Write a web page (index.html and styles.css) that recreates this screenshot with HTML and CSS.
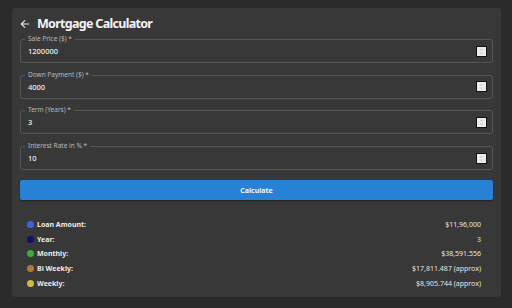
FILE: index.html
```html
<!DOCTYPE html>
<html lang="en">
<head>
    <meta charset="UTF-8">
    <title>Mortgage Calculator</title>
    <link rel="stylesheet" href="styles.css">
</head>
<body>
    <div class="card">
        <div class="header">
            <svg class="back" width="10" height="10" viewBox="0 0 10 10">
                <path d="M9 5H1.5M5 1.3L1.3 5L5 8.7" fill="none" stroke="#e6e6e6" stroke-width="1.2"/>
            </svg>
            <h1>Mortgage Calculator</h1>
        </div>

        <div class="form">
            <div class="field">
                <span class="field-label">Sale Price ($) *</span>
                <span class="field-value">1200000</span>
                <svg class="spin" width="11" height="11" viewBox="0 0 11 11"><path d="M4 4.2L5.5 2.8L7 4.2M4 6.8L5.5 8.2L7 6.8" fill="none" stroke="#9c9c9c" stroke-width=".8"/></svg>
            </div>
            <div class="field">
                <span class="field-label">Down Payment ($) *</span>
                <span class="field-value">4000</span>
                <svg class="spin" width="11" height="11" viewBox="0 0 11 11"><path d="M4 4.2L5.5 2.8L7 4.2M4 6.8L5.5 8.2L7 6.8" fill="none" stroke="#9c9c9c" stroke-width=".8"/></svg>
            </div>
            <div class="field">
                <span class="field-label">Term (Years) *</span>
                <span class="field-value">3</span>
                <svg class="spin" width="11" height="11" viewBox="0 0 11 11"><path d="M4 4.2L5.5 2.8L7 4.2M4 6.8L5.5 8.2L7 6.8" fill="none" stroke="#9c9c9c" stroke-width=".8"/></svg>
            </div>
            <div class="field">
                <span class="field-label">Interest Rate in % *</span>
                <span class="field-value">10</span>
                <svg class="spin" width="11" height="11" viewBox="0 0 11 11"><path d="M4 4.2L5.5 2.8L7 4.2M4 6.8L5.5 8.2L7 6.8" fill="none" stroke="#9c9c9c" stroke-width=".8"/></svg>
            </div>
            <button class="btn">Calculate</button>
        </div>

        <ul class="results">
            <li><span class="dot dot-loan"></span><b>Loan Amount:</b><span class="val">$11,96,000</span></li>
            <li><span class="dot dot-year"></span><b>Year:</b><span class="val">3</span></li>
            <li><span class="dot dot-month"></span><b>Monthly:</b><span class="val">$38,591.556</span></li>
            <li><span class="dot dot-bi"></span><b>Bi Weekly:</b><span class="val">$17,811.487 (approx)</span></li>
            <li><span class="dot dot-week"></span><b>Weekly:</b><span class="val">$8,905.744 (approx)</span></li>
        </ul>
    </div>
</body>
</html>
```

FILE: styles.css
```css
html,body{
    margin: 0;
    background-color: #2b2b2b;
    font-family: "Noto Sans", "Open Sans", sans-serif;
    color: #ececec;
}
body{
    padding: 8px 11px 0 12px;
}
.card{
    height: 289px;
    box-sizing: border-box;
    padding: 0 8px;
    background-color: #383838;
    border-radius: 4px;
}
.header{
    display: flex;
    align-items: center;
    height: 31px;
}
.back{
    margin: 0 7px 0 0;
}
.header h1{
    margin: 0;
    font-size: 12.5px;
    font-weight: 700;
    letter-spacing: -0.7px;
    color: #f4f4f4;
}
.form{
    display: flex;
    flex-direction: column;
    gap: 11.7px;
}
.field{
    position: relative;
    display: flex;
    align-items: center;
    height: 24px;
    box-sizing: border-box;
    padding: 0 5px 0 7px;
    border: 1px solid #575757;
    border-radius: 3px;
}
.field-label{
    position: absolute;
    top: -5px;
    left: 4px;
    padding: 0 3px;
    font-size: 6.5px;
    line-height: 8px;
    color: #b8b8b8;
    background-color: #383838;
}
.field-value{
    flex: 1;
    font-size: 7.5px;
    font-weight: 500;
    color: #f2f2f2;
}
.spin{
    box-sizing: border-box;
    background-color: #ececec;
    border: 1px solid #111;
}
.btn{
    height: 20px;
    margin-top: -1.7px;
    border: 0;
    border-radius: 2px;
    background-color: #2782d6;
    color: #f2f6fb;
    font-family: inherit;
    font-size: 7px;
    font-weight: 700;
    box-shadow: 0 1px 2px rgba(0,0,0,.4);
}
.results{
    list-style: none;
    margin: 17px 0 0 0;
    padding: 0 12px 0 7px;
}
.results li{
    display: flex;
    align-items: center;
    height: 14.7px;
    font-size: 7px;
}
.results b{
    flex: 1;
    font-weight: 700;
}
.dot{
    width: 7px;
    height: 7px;
    margin-right: 3px;
    border-radius: 50%;
}
.dot-loan{ background-color: #3f5fe6; }
.dot-year{ background-color: #140f6b; }
.dot-month{ background-color: #3aac3f; }
.dot-bi{ background-color: #b07a3b; }
.dot-week{ background-color: #d3b844; }
.val{
    color: #e4e4e4;
}
```
